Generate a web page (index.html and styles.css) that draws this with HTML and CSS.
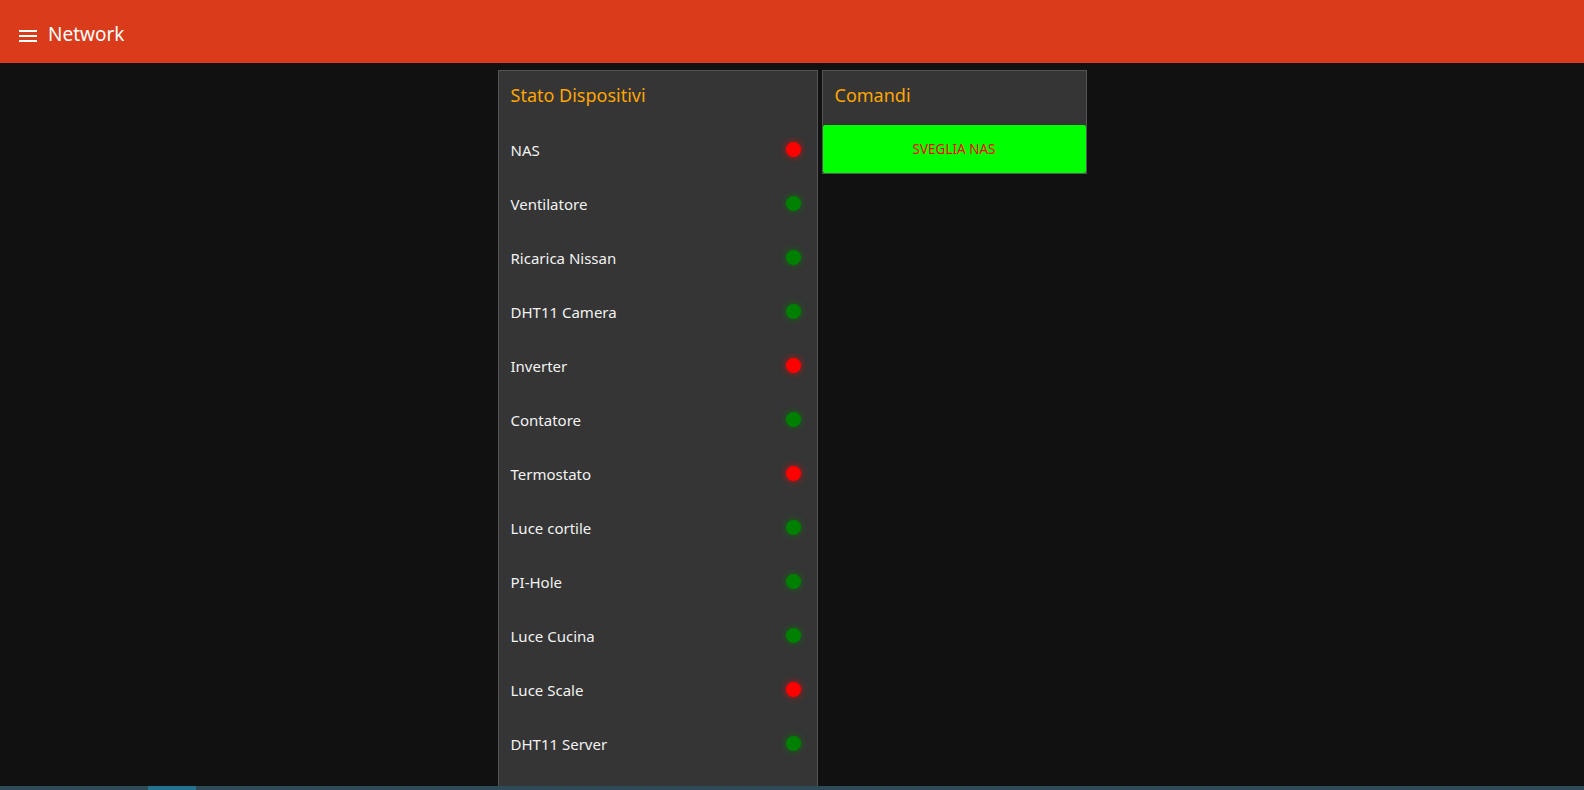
FILE: index.html
```html
<!DOCTYPE html>
<html lang="it">
<head>
<meta charset="utf-8">
<title>Network</title>
<link rel="stylesheet" href="styles.css">
</head>
<body>
<header class="topbar">
  <svg class="menu-icon" width="18" height="14" viewBox="0 0 18 14" aria-hidden="true">
    <rect x="0" y="1" width="18" height="2" fill="#fff"/>
    <rect x="0" y="6" width="18" height="2" fill="#fff"/>
    <rect x="0" y="11" width="18" height="2" fill="#fff"/>
  </svg>
  <span class="topbar-title">Network</span>
</header>
<main class="content">
  <section class="card card-status">
    <h2 class="card-title">Stato Dispositivi</h2>
    <ul class="device-list">
      <li class="device"><span>NAS</span><i class="dot dot-off"></i></li>
      <li class="device"><span>Ventilatore</span><i class="dot dot-on"></i></li>
      <li class="device"><span>Ricarica Nissan</span><i class="dot dot-on"></i></li>
      <li class="device"><span>DHT11 Camera</span><i class="dot dot-on"></i></li>
      <li class="device"><span>Inverter</span><i class="dot dot-off"></i></li>
      <li class="device"><span>Contatore</span><i class="dot dot-on"></i></li>
      <li class="device"><span>Termostato</span><i class="dot dot-off"></i></li>
      <li class="device"><span>Luce cortile</span><i class="dot dot-on"></i></li>
      <li class="device"><span>PI-Hole</span><i class="dot dot-on"></i></li>
      <li class="device"><span>Luce Cucina</span><i class="dot dot-on"></i></li>
      <li class="device"><span>Luce Scale</span><i class="dot dot-off"></i></li>
      <li class="device"><span>DHT11 Server</span><i class="dot dot-on"></i></li>
    </ul>
  </section>
  <section class="card card-commands">
    <h2 class="card-title title-commands">Comandi</h2>
    <button class="cmd-button">SVEGLIA NAS</button>
  </section>
</main>
<div class="progress"><div class="progress-thumb"></div></div>
</body>
</html>
```
FILE: styles.css
```css
* { box-sizing: border-box; }
html, body {
  margin: 0;
  padding: 0;
  background: #111111;
  font-family: "Noto Sans", "Open Sans", "Liberation Sans", sans-serif;
  color: #ffffff;
}
.topbar {
  height: 63px;
  background: #d93b1b;
  display: flex;
  align-items: center;
  padding-left: 19px;
  padding-top: 7px;
}
.menu-icon { display: block; margin-top: 1px; }
.topbar-title {
  margin-left: 11px;
  font-size: 19px;
  color: #fff;
  line-height: 1;
  padding-bottom: 1px;
}
.content {
  display: flex;
  justify-content: center;
  align-items: flex-start;
  gap: 4px;
  padding-top: 7px;
}
.card {
  background: #353535;
  border: 1px solid #545454;
}
.card-status { width: 320px; }
.card-commands { width: 265px; }
.card-title {
  margin: 0;
  height: 51px;
  padding: 11px 12px 0;
  font-size: 18px;
  font-weight: normal;
  color: #ffa500;
  line-height: 26px;
}
.title-commands { height: 54px; }
.device-list {
  list-style: none;
  margin: 0;
  padding: 0 0 54px;
}
.device {
  height: 54px;
  display: flex;
  align-items: center;
  justify-content: space-between;
  padding: 0 16px 0 12px;
  font-size: 15px;
  color: #f2f2f2;
}
.device span { padding-top: 1px; }
.dot {
  width: 15px;
  height: 15px;
  border-radius: 50%;
  display: block;
}
.dot-off {
  background: #ff0000;
  box-shadow: 0 0 6px 1px rgba(255, 0, 0, 0.55);
}
.dot-on {
  background: #008000;
  box-shadow: 0 0 6px 1px rgba(0, 128, 0, 0.55);
}
.cmd-button {
  display: block;
  width: 100%;
  height: 48px;
  border: 0;
  border-radius: 2px;
  background: #00ff00;
  color: #ff0000;
  font-family: inherit;
  font-size: 13.5px;
  letter-spacing: 0;
  cursor: pointer;
}
.progress {
  position: fixed;
  left: 0;
  right: 0;
  bottom: 0;
  height: 4px;
  background: #2e4b58;
}
.progress-thumb {
  margin-left: 148px;
  width: 48px;
  height: 100%;
  background: #26718f;
}
```
